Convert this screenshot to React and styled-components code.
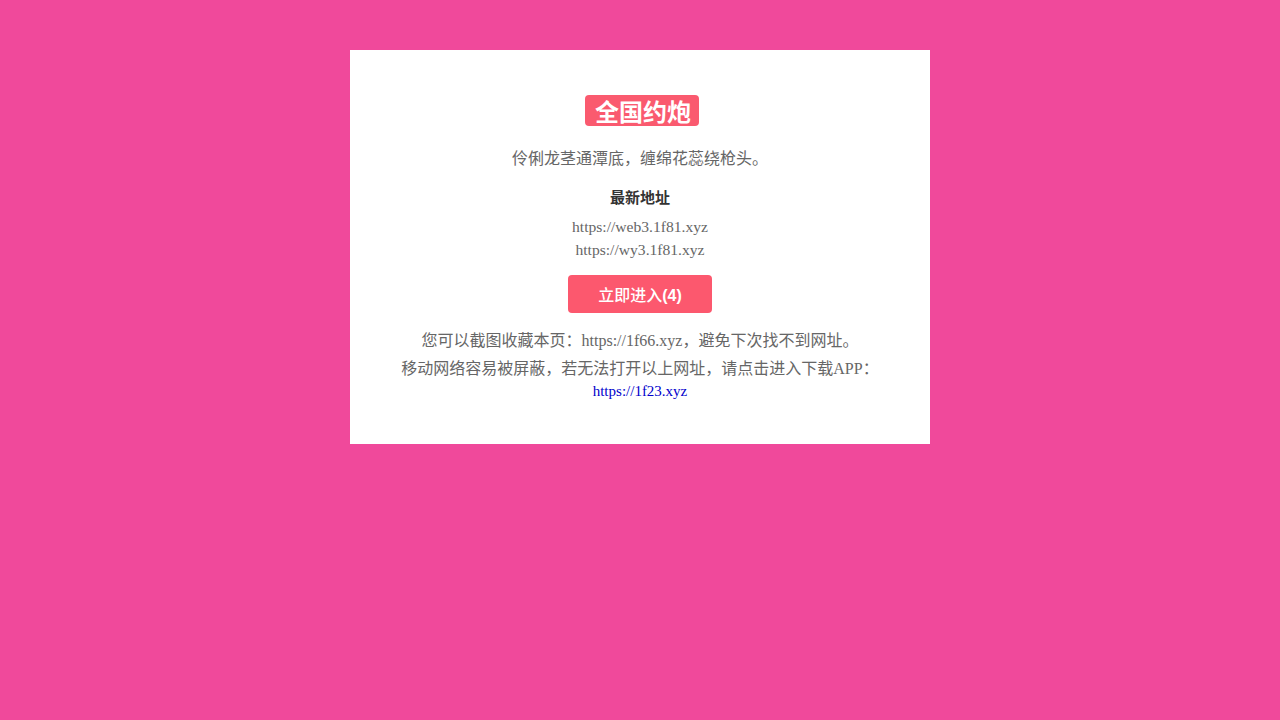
import React from 'react';
import styled, { createGlobalStyle } from 'styled-components';

const GlobalStyle = createGlobalStyle`
  html, body {
    margin: 0;
    padding: 0;
    background: #f0499b;
    font-family: "Liberation Serif", "Noto Sans CJK SC", serif;
  }
`;

const Page = styled.div`
  min-height: 720px;
  padding-top: 50px;
  box-sizing: border-box;
`;

const Card = styled.div`
  width: 580px;
  margin: 0 auto;
  background: #fff;
  padding: 45px 0 44px;
  box-sizing: border-box;
  text-align: center;
  color: #666;
`;

const Badge = styled.span`
  display: inline-block;
  margin-left: 4px;
  background: #fa5a6f;
  color: #fff;
  font-family: "Noto Sans CJK SC", sans-serif;
  font-weight: 700;
  font-size: 24px;
  line-height: 31px;
  padding: 0 8px 0 10px;
  border-radius: 4px;
`;

const Slogan = styled.p`
  margin: 20px 0 0;
  font-size: 16px;
  line-height: 26px;
`;

const Heading = styled.h3`
  margin: 14px 0 0;
  font-size: 15px;
  line-height: 24px;
  color: #333;
  font-weight: 700;
`;

const UrlLine = styled.div`
  font-size: 15.6px;
  line-height: 23px;
  margin-top: ${(p) => p.$top || 0}px;
`;

const EnterButton = styled.button`
  display: block;
  margin: 14px auto 0;
  width: 144px;
  height: 38px;
  border: none;
  border-radius: 4px;
  background: #fc586e;
  color: #fff;
  font-family: "Noto Sans CJK SC", sans-serif;
  font-weight: 500;
  font-size: 16px;
  cursor: pointer;
  b { font-family: "Liberation Sans", sans-serif; font-weight: 700; }
`;

const Note = styled.p`
  margin: ${(p) => p.$top || 0}px 0 0;
  font-size: 16px;
  line-height: 26px;
`;

const Link = styled.a`
  display: block;
  color: #0000cc;
  text-decoration: none;
  font-size: 15px;
  line-height: 18px;
`;

export default function App() {
  return (
    <>
      <GlobalStyle />
      <Page>
        <Card>
          <Badge>全国约炮</Badge>
          <Slogan>伶俐龙茎通潭底，缠绵花蕊绕枪头。</Slogan>
          <Heading>最新地址</Heading>
          <UrlLine $top={5}>https://web3.1f81.xyz</UrlLine>
          <UrlLine>https://wy3.1f81.xyz</UrlLine>
          <EnterButton>立即进入<b>(4)</b></EnterButton>
          <Note $top={15}>您可以截图收藏本页：https://1f66.xyz，避免下次找不到网址。</Note>
          <Note $top={2}>移动网络容易被屏蔽，若无法打开以上网址，请点击进入下载APP：</Note>
          <Link href="#">https://1f23.xyz</Link>
        </Card>
      </Page>
    </>
  );
}
